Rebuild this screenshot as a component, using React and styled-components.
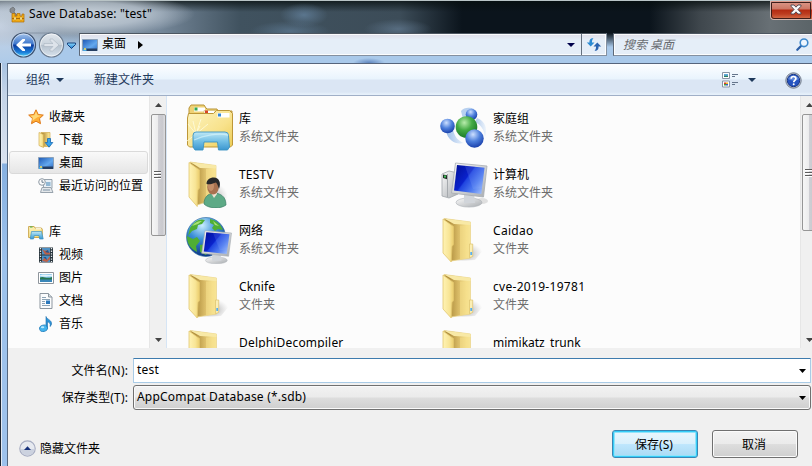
import React from 'react';
import styled, { createGlobalStyle } from 'styled-components';

const Global = createGlobalStyle`
  * { box-sizing: border-box; }
  body {
    margin: 0;
    overflow: hidden;
    background: #f0f0f0;
    font-family: "Noto Sans", "Noto Sans CJK SC", sans-serif;
    font-size: 12px;
    color: #000;
  }
  svg { display: block; flex: none; }
`;

/* ---------- window frame ---------- */

const Window = styled.div`
  width: 812px;
  height: 466px;
  overflow: hidden;
  display: flex;
  flex-direction: column;
  border-top: 1px solid #b9c4c6;
  background:
    radial-gradient(ellipse 110px 22px at 85px 13px, rgba(205, 213, 221, 0.9) 0%, rgba(188, 199, 210, 0.8) 55%, rgba(150, 165, 180, 0) 100%),
    radial-gradient(ellipse 60px 46px at 0px 24px, rgba(200, 212, 228, 0.95), rgba(190, 205, 222, 0) 100%),
    radial-gradient(ellipse 24px 12px at 304px 14px, rgba(100, 130, 158, 0.75), transparent),
    radial-gradient(ellipse 40px 10px at 290px 30px, rgba(100, 130, 158, 0.6), transparent),
    radial-gradient(ellipse 34px 10px at 398px 28px, rgba(105, 130, 155, 0.6), transparent),
    radial-gradient(ellipse 16px 5px at 369px 62px, rgba(70, 110, 175, 0.75), transparent),
    linear-gradient(180deg, rgba(6, 14, 14, 0.75) 0, rgba(6, 14, 14, 0) 11px, rgba(0, 0, 0, 0) 32px, #a9c9ea 46px, #a9c9ea 64px),
    linear-gradient(90deg, #9caaba 0, #758799 160px, #40525f 240px, #3c4c58 400px, #0b141c 462px, #0b141c 650px, #3f474d 700px, #687075 770px, #5b6468 812px);
`;

const TitleBar = styled.header`
  height: 32px;
  display: flex;
  flex: none;
  align-items: flex-start;
  justify-content: space-between;
`;

const Title = styled.div`
  display: flex;
  align-items: flex-start;
  gap: 4px;
  padding: 4px 0 0 9px;
  h1 {
    margin: 0;
    font-size: 12px;
    font-weight: 400;
    line-height: 18px;
    white-space: nowrap;
    letter-spacing: 0.14px;
  }
`;

const CloseButton = styled.button`
  width: 42px;
  height: 19px;
  padding: 0 0 2px 8px;
  border: 1px solid #d3b5ae;
  border-width: 0 0 1px 1px;
  border-radius: 0 0 0 4px;
  outline: 1px solid #3d1d1a;
  outline-offset: -2px;
  background: linear-gradient(#dd9c8d 0, #cd7765 8px, #b32a12 9px, #bd3c20 13px, #d7714c 18px);
  display: flex;
  align-items: center;
  justify-content: center;
`;

const NavBar = styled.nav`
  height: 24px;
  flex: none;
  display: flex;
  align-items: flex-start;
  padding-left: 10px;
`;

const NavButtons = styled.div`
  width: 69px;
  height: 26px;
  margin-top: -1px;
`;

const Field = styled.div`
  height: 23px;
  width: ${(p) => p.$width}px;
  margin-right: ${(p) => p.$gap || 0}px;
  display: flex;
  flex: none;
  align-items: center;
  border: 1px solid #8490a0;
  border-top-color: #4d5661;
  border-left-color: #5d6877;
  box-shadow: inset 0 0 0 1px rgba(255, 255, 255, 0.85);
  background: linear-gradient(#dfdee8, #e5eef8 6px, #e5eef8);
`;

const Crumb = styled.div`
  display: flex;
  align-items: center;
  gap: 4px;
  padding-left: 2px;
  flex: 1;
  line-height: 18px;
  span { margin-right: 8px; padding-bottom: 1px; }
`;

const Refresh = styled.div`
  width: 25px;
  height: 21px;
  border-left: 1px solid #64707e;
  display: flex;
  align-items: center;
  justify-content: center;
`;

const DropSlot = styled.div`
  width: 20px;
  display: flex;
  justify-content: center;
`;

const SearchHint = styled.span`
  flex: 1;
  padding-left: 9px;
  color: #6a6d72;
  font-style: italic;
  line-height: 18px;
`;

const Frame = styled.div`
  flex: 1;
  min-height: 0;
  margin-top: 6px;
  display: flex;
`;

const LeftEdge = styled.div`
  width: 8px;
  flex: none;
  border-left: 1px solid #1c2532;
  border-right: 1px solid #54677f;
  background: linear-gradient(90deg, #e2eaf4 0, #e2eaf4 1px, transparent 1px),
    linear-gradient(#a7c3e2 0, #c3d3e7 30px, #d9e2ef 100px, #86b0e0 101px, #9dc2ec 200px, #9dc2ec);
`;

const Body = styled.div`
  flex: 1;
  min-width: 0;
  display: flex;
  flex-direction: column;
  border-top: 1px solid #56657c;
`;

/* ---------- toolbar ---------- */

const Toolbar = styled.div`
  height: 32px;
  flex: none;
  display: flex;
  align-items: center;
  padding: 1px 0 0 18px;
  color: #1e395b;
  line-height: 18px;
  border-bottom: 1px solid #a0afc7;
  background: linear-gradient(#fdfeff 0, #e9f4fd 15px, #dbe6f4 16px, #dbe6f4 28px, #e6f0fa 30px);
`;

const ToolItem = styled.div`
  display: flex;
  align-items: center;
  gap: ${(p) => p.$gap || 5}px;
  margin-right: ${(p) => p.$after || 0}px;
`;

const Spacer = styled.div`
  flex: 1;
`;

/* ---------- panes ---------- */

const Panes = styled.div`
  height: 252px;
  flex: none;
  display: flex;
  overflow: hidden;
  background: #fcfcfc;
`;

const Sidebar = styled.aside`
  width: 141px;
  flex: none;
  padding-top: 9px;
`;

const TreeRow = styled.div`
  height: 23px;
  margin: 0 1px;
  margin-bottom: ${(p) => (p.$last ? 23 : 0)}px;
  padding-left: ${(p) => (p.$child ? 28 : 18)}px;
  display: flex;
  align-items: center;
  gap: 5px;
  white-space: nowrap;
  line-height: 18px;
  border: 1px solid ${(p) => (p.$selected ? '#dadada' : 'transparent')};
  border-radius: 3px;
  background: ${(p) => (p.$selected ? 'linear-gradient(#f9f9f9, #e6e6e6)' : 'none')};
`;

const Track = styled.div`
  width: 17px;
  flex: none;
  display: flex;
  flex-direction: column;
  align-items: center;
  background: #f0f0f0;
  border-left: 1px solid #e6e6e6;
`;

const Arrow = styled.div`
  height: 17px;
  width: 15px;
  display: flex;
  align-items: center;
  justify-content: center;
`;

const Thumb = styled.div`
  width: 15px;
  height: ${(p) => p.$height}px;
  margin-top: 1px;
  margin-bottom: auto;
  border: 1px solid #969696;
  border-radius: 2px;
  background: linear-gradient(90deg, #f6f6f6, #ececed 45%, #cfcfd4 50%, #c9c9ce 80%, #dedee0);
  display: flex;
  align-items: center;
  justify-content: center;
`;

const FileList = styled.main`
  flex: 1;
  min-width: 0;
  border-left: 1px solid #d6e5f5;
  padding: 4px 0 0 16px;
  display: grid;
  grid-template-columns: 254px 254px;
  grid-auto-rows: 56px;
  align-content: start;
`;

const FileItem = styled.div`
  display: flex;
  align-items: center;
  gap: 4px;
`;

const FileText = styled.div`
  line-height: 18px;
  white-space: nowrap;
  small {
    display: block;
    font-size: 12px;
    color: #6d6d6d;
  }
`;

const FileName = styled.div`
  letter-spacing: ${(p) => p.$spacing || 0}px;
`;

const ClippedTrack = styled.div`
  width: 12px;
  overflow: hidden;
  display: flex;
  flex: none;
`;

/* ---------- footer ---------- */

const Footer = styled.footer`
  flex: 1;
  background: #f0f0f0;
  padding-top: 10px;
`;

const FormRow = styled.div`
  display: flex;
  align-items: flex-start;
  gap: 5px;
  height: 27px;
  label {
    width: 120px;
    text-align: right;
    line-height: 25px;
    letter-spacing: 0.15px;
  }
`;

const Combo = styled.div`
  width: 678px;
  height: 25px;
  padding: 0 4px 0 3px;
  display: flex;
  align-items: center;
  justify-content: space-between;
  line-height: 18px;
  letter-spacing: 0.2px;
  span { padding-bottom: 1px; }
  border: 1px solid ${(p) => (p.$input ? '#a9cbe6' : '#707070')};
  border-top-color: ${(p) => (p.$input ? '#3d7bad' : '#707070')};
  border-radius: ${(p) => (p.$input ? 1 : 3)}px;
  box-shadow: ${(p) => (p.$input ? 'none' : 'inset 0 0 0 1px #fafafa')};
  background: ${(p) =>
    p.$input ? '#fff' : 'linear-gradient(#f2f2f2, #ebebeb 48%, #dddddd 52%, #cfcfcf)'};
`;

const Actions = styled.div`
  display: flex;
  align-items: center;
  height: 28px;
  margin-top: 18px;
  padding-right: 14px;
  gap: 14px;
`;

const HideFolders = styled.div`
  display: flex;
  align-items: center;
  gap: 4px;
  padding: 8px 0 0 11px;
  line-height: 18px;
  flex: 1;
  span { padding-top: 1px; }
`;

const PushButton = styled.button`
  width: 86px;
  height: 28px;
  padding: 0 2px 1px 0;
  font: inherit;
  color: #000;
  border: 1px solid ${(p) => (p.$primary ? '#3a86b4' : '#707070')};
  border-radius: 3px;
  box-shadow: ${(p) =>
    p.$primary ? 'inset 0 0 0 1px #35cdf8, inset 0 0 0 2px #93e3fa' : 'inset 0 0 0 1px #fbfbfb'};
  background: ${(p) =>
    p.$primary
      ? 'linear-gradient(#eaf6fd, #d9f0fc 48%, #bee6fd 52%, #a9daf3)'
      : 'linear-gradient(#f2f2f2, #ebebeb 48%, #dddddd 52%, #cfcfcf)'};
`;

/* ---------- glyphs ---------- */

const Down = ({ color = '#000', w = 7 }) => (
  <svg width={w} height="4" viewBox="0 0 8 4" preserveAspectRatio="none">
    <path d="M0 0h8L4 4z" fill={color} />
  </svg>
);
const Up = () => (
  <svg width="7" height="4" viewBox="0 0 7 4"><path d="M0 4h7L3.5 0z" fill="#444" /></svg>
);
const Grip = () => (
  <svg width="8" height="8" viewBox="0 0 8 8">
    <path d="M0 .5h7M0 3.5h7M0 6.5h7" stroke="#5c5c5c" />
    <path d="M0 1.5h7M0 4.5h7M0 7.5h7" stroke="#fff" />
  </svg>
);

const Defs = () => (
  <svg width="0" height="0">
    <defs>
      <linearGradient id="flap" x1="0" x2="1"><stop offset="0" stopColor="#fff3b4" /><stop offset=".6" stopColor="#f8e596" /><stop offset="1" stopColor="#ebcd6c" /></linearGradient>
      <linearGradient id="inner" x1="0" x2="1"><stop offset=".2" stopColor="#b08f3e" /><stop offset=".55" stopColor="#d9bb66" /><stop offset=".85" stopColor="#f5df8c" /><stop offset="1" stopColor="#f9e89f" /></linearGradient>
      <linearGradient id="front" x1="0" x2="1" y2="1"><stop offset="0" stopColor="#fdf4c0" /><stop offset=".6" stopColor="#f8e28c" /><stop offset="1" stopColor="#eccc55" /></linearGradient>
      <linearGradient id="stand" x2="0" y2="1"><stop offset="0" stopColor="#c0e8f5" /><stop offset=".5" stopColor="#73c0e6" /><stop offset="1" stopColor="#3b96d0" /></linearGradient>
      <linearGradient id="screen" x1="0" x2="1" y1=".2" y2=".9"><stop offset="0" stopColor="#0212a0" /><stop offset=".38" stopColor="#0a22cc" /><stop offset=".42" stopColor="#1f45e0" /><stop offset=".7" stopColor="#4f7cf0" /><stop offset="1" stopColor="#a4c2fb" /></linearGradient>
      <linearGradient id="screen2" x1="0" x2="1" y2="1"><stop offset="0" stopColor="#1b56b3" /><stop offset=".6" stopColor="#63a8ee" /><stop offset="1" stopColor="#2f6cc4" /></linearGradient>
      <linearGradient id="silver" x1="0" x2="1" y2="1"><stop offset="0" stopColor="#fafafa" /><stop offset="1" stopColor="#a9adb1" /></linearGradient>
      <radialGradient id="green" cx=".4" cy=".3" r=".7"><stop offset="0" stopColor="#b7ecab" /><stop offset=".5" stopColor="#44ab45" /><stop offset="1" stopColor="#1a7a28" /></radialGradient>
      <radialGradient id="blueBall" cx=".42" cy=".28" r=".75"><stop offset="0" stopColor="#cde0ff" /><stop offset=".5" stopColor="#4e80dc" /><stop offset="1" stopColor="#163ca8" /></radialGradient>
      <radialGradient id="ocean" cx=".4" cy=".2" r=".8"><stop offset="0" stopColor="#c9eeff" /><stop offset=".45" stopColor="#3b8fd8" /><stop offset="1" stopColor="#0c3585" /></radialGradient>
      <linearGradient id="nav" x2="0" y2="1"><stop offset="0" stopColor="#a8c6ec" /><stop offset=".46" stopColor="#3a74cb" /><stop offset=".5" stopColor="#0b3a9e" /><stop offset=".8" stopColor="#1a7cd8" /><stop offset="1" stopColor="#53dcfb" /></linearGradient>
      <linearGradient id="navOff" x2="0" y2="1"><stop offset="0" stopColor="#e2e7ed" /><stop offset=".48" stopColor="#c9d3dc" /><stop offset=".52" stopColor="#b5c1cd" /><stop offset="1" stopColor="#d9e4ee" /></linearGradient>
      <radialGradient id="shade" cx=".35" cy=".6" r=".6"><stop offset="0" stopColor="#666" stopOpacity=".55" /><stop offset="1" stopColor="#999" stopOpacity="0" /></radialGradient>
      <linearGradient id="gem" x2="0" y2="1"><stop offset="0" stopColor="#8fdcff" /><stop offset="1" stopColor="#1a78cf" /></linearGradient>
      <linearGradient id="swirl" x1="0" x2="1"><stop offset="0" stopColor="#7ba7e2" /><stop offset="1" stopColor="#e6f0fb" /></linearGradient>
    </defs>
  </svg>
);

const AppIcon = () => (
  <svg width="16" height="20" viewBox="0 0 16 20">
    <path d="M1 4l3-2 2 2-1 3 5 5-2 2-5-6-2-1z" fill="#888c90" stroke="#5f6468" strokeWidth=".6" />
    <path d="M3 11V8.500h3V11h2V8.500h3V11h2V9h2v8H3z" fill="#f2ad18" stroke="#b06f08" strokeWidth=".7" />
    <path d="M3 13.500h12" stroke="#a86a0a" />
    <path d="M5 12h2v3H5zM11 12h2v3h-2z" fill="#fff0a0" stroke="#b06f08" strokeWidth=".4" />
  </svg>
);

const NavArt = () => (
  <svg width="69" height="27" viewBox="0 0 69 27">
    <path d="M13 1h28c3 0 4 2 6 5" fill="none" stroke="#7c8a9b" strokeOpacity=".7" />
    <circle cx="13.500" cy="13" r="12" fill="url(#nav)" stroke="#41536e" strokeWidth="1.200" />
    <circle cx="13.500" cy="13" r="11" fill="none" stroke="#e0ebf8" strokeOpacity=".75" />
    <path d="M6 13l6.500-6h2.500v1.600L12 11.500h9v3h-9l3 3V19h-2.500z" fill="#fff" />
    <circle cx="41.500" cy="13" r="12" fill="url(#navOff)" stroke="#6b7b8e" strokeWidth="1.200" />
    <circle cx="41.500" cy="13" r="11" fill="none" stroke="#fff" strokeOpacity=".6" />
    <path d="M49 13l-6.500-6H40v1.600l3 2.900h-9v3h9l-3 3V19h2.500z" fill="#dde3ea" stroke="#a1acb9" strokeWidth=".5" />
    <path d="M57.500 11h8v1.500l-4 4-4-4z" fill="url(#gem)" stroke="#15407c" />
  </svg>
);

const CloseGlyph = () => (
  <svg width="12" height="11" viewBox="0 0 12 11">
    <path d="M1 1h3l2 2.200L8 1h3v1.200L7.900 5.500 11 8.800V10H8L6 7.800 4 10H1V8.800l3.100-3.300L1 2.200z" fill="#fafafa" stroke="#47424d" strokeWidth=".9" />
  </svg>
);

const DesktopIcon = () => (
  <svg width="16" height="16" viewBox="0 0 16 16">
    <path d="M.5 2.500h15v11H.5z" fill="url(#screen2)" stroke="#8ba0b8" />
    <path d="M1 11.500h14V14H1z" fill="#263f62" />
    <path d="M1 11.500h3.500V14H1z" fill="#47a6df" />
    <circle cx="3" cy="12" r="1" fill="#ffe05a" />
  </svg>
);

const RefreshIcon = () => (
  <svg width="16" height="15" viewBox="0 0 16 15">
    <path d="M7.500 1.200C4.200 1 3.300 3 3.500 5.500H.8L4.700 9.500l3.800-4H6C5.800 3.500 6.500 2.200 7.500 1.200z" fill="#2b8bd3" />
    <path d="M8.500 13.800c3.300.2 4.200-1.800 4-4.300h2.700L11.300 5.500l-3.800 4H10c.2 2-.5 3.300-1.500 4.300z" fill="#2a63b0" />
  </svg>
);

const SearchIcon = () => (
  <svg width="13" height="13" viewBox="0 0 13 13">
    <path d="M1.300 11.800L5 8" stroke="#2c5fa8" strokeWidth="2.200" strokeLinecap="round" />
    <circle cx="8" cy="4.800" r="3.800" fill="#eef6ff" stroke="#3f89cc" strokeWidth="1.600" />
  </svg>
);

const ViewIcon = () => (
  <svg width="16" height="16" viewBox="0 0 16 16">
    <path d="M.5.500h7v6h-7zM.5 9h7v6h-7z" fill="#fff" stroke="#8995a5" />
    <path d="M2 2h4v3H2z" fill="#5fa9d8" /><path d="M2 3.800h4V5H2z" fill="#2f8060" />
    <path d="M2 10.500h2V12H2z" fill="#d63a2e" /><path d="M4 10.500h2V12H4z" fill="#f3b61c" />
    <path d="M2 12h2v1.500H2z" fill="#3fa03f" /><path d="M4 12h2v1.500H4z" fill="#3158c8" />
    <path d="M10 2.500h6M10 4.500h3M10 10.500h6M10 12.500h3" stroke="#65758b" />
  </svg>
);

const HelpIcon = () => (
  <svg width="17" height="17" viewBox="0 0 17 17">
    <circle cx="8.500" cy="8.500" r="7.700" fill="#c9cfd9" stroke="#6e7889" strokeWidth="1" />
    <circle cx="8.500" cy="8.500" r="6.200" fill="#2553c0" stroke="#1a3784" />
    <path d="M3 7a6 6 0 0 1 11 0c-3 2-7 2-11 0z" fill="#7ea4ea" opacity=".6" />
    <path d="M6.200 6.800c0-3 4.700-3 4.700-.2 0 1.700-2.200 1.700-2.200 3.600" fill="none" stroke="#fff" strokeWidth="1.700" />
    <circle cx="8.700" cy="12.200" r="1" fill="#fff" />
  </svg>
);

const small = { width: 16, height: 16, viewBox: '0 0 16 16' };

const StarIcon = () => (
  <svg {...small}>
    <path d="M8 .8l2.200 4.700 5.100.6-3.800 3.500 1 5.100L8 12.200l-4.500 2.500 1-5.100L.7 6.100l5.100-.6z" fill="#ffae35" stroke="#df7a1b" strokeLinejoin="round" />
    <path d="M8 2.500l1.600 3.800 4 .5-4.200 1.400L4 12l1-3.300-2.800-2 4.200-.4z" fill="#ffd877" />
  </svg>
);
const DownloadIcon = () => (
  <svg {...small}>
    <path d="M3 .5h9v14H3z" fill="url(#inner)" stroke="#d2ae52" strokeWidth=".7" />
    <path d="M1 .5l4.500 2v13L1 13.500z" fill="url(#flap)" stroke="#d2ae52" strokeWidth=".7" />
    <path d="M9.500 6.500h3v4h2.300L11 15.200l-3.800-4.700h2.300z" fill="#36a3ec" stroke="#1768b2" strokeWidth=".8" />
  </svg>
);
const RecentIcon = () => (
  <svg {...small}>
    <path d="M5.500 1.500h8.500v9H5.500z" fill="#e8eff5" stroke="#98a3ad" />
    <path d="M8 4h4.500v4H8z" fill="#93b8d3" /><path d="M4 9.500h9l2 5H2.500z" fill="#e3e7ea" stroke="#98a3ad" />
    <path d="M5 12h7" stroke="#7e93a5" />
    <circle cx="4" cy="4" r="3.300" fill="#fbfbfb" stroke="#8e9aa4" /><path d="M4 2v2.300h1.800" fill="none" stroke="#4d6376" strokeWidth=".8" />
  </svg>
);
const LibSmall = () => (
  <svg {...small}>
    <path d="M.6 2.500h5.500l1 1.500h6.300l.9 1.300v8.200H.6z" fill="url(#front)" stroke="#c7a243" strokeWidth=".9" />
    <path d="M2 3h2.500" stroke="#3fad4d" /><path d="M8 4.800h5" stroke="#fff" />
    <path d="M3.500 7.500h10l1.700 7.500h-3.500l-.7-3.500H6.300L5.500 15H2.200z" fill="url(#stand)" stroke="#3a92c4" strokeWidth=".7" />
  </svg>
);
const VideoIcon = () => (
  <svg {...small}>
    <path d="M1 .5h14v15H1z" fill="#28343c" /><path d="M4 1h8v6.500H4zM4 8.500h8v6.500H4z" fill="#4d91c5" />
    <path d="M4 2l3 2 2-1 3 3v1.500H7zM4 14l3-4 2 3 3-4v3l-3 3z" fill="#bf6046" /><path d="M7 5l3-2 1 3zM5 10h3l1 3z" fill="#23568f" />
    <path d="M2.500 1v14M13.500 1v14" stroke="#e5e9ec" strokeWidth="1.300" strokeDasharray="1.300 1.300" />
  </svg>
);
const PictureIcon = () => (
  <svg {...small}>
    <path d="M.5 2.500h15v11H.5z" fill="#fff" stroke="#8e959c" /><path d="M2 4h12v8H2z" fill="#82c3ec" />
    <path d="M2 7.500c4-2 6 2 12-.5V10H2z" fill="#277751" /><path d="M2 9.500h12V12H2z" fill="#3a86b8" /><path d="M2 5.500c3-2 6 0 12-1v2c-5 0-7 .6-12-.2z" fill="#e2f4fb" />
  </svg>
);
const DocIcon = () => (
  <svg {...small}>
    <path d="M2 .5h8.500l3.500 3.500v11.500H2z" fill="#fbfcfd" stroke="#8d969f" /><path d="M10.500.500V4H14" fill="#d6dde3" stroke="#8d969f" />
    <path d="M4 4.500h4M4 6.500h8M4 8.500h3M4 10.500h3M4 12.500h8" stroke="#8098ad" strokeWidth=".9" /><path d="M8 7.500h4v3.500H8z" fill="#2b78bc" />
  </svg>
);
const MusicIcon = () => (
  <svg {...small}>
    <path d="M8 .5c1 3 6 3.500 5.500 7.500-.1 1.300-.8 2-1.500 2.500.9-2.800-.5-4-2.500-4.700v6.700h-1.500z" fill="#2c94d8" stroke="#1669aa" strokeWidth=".6" />
    <ellipse cx="5.500" cy="12.300" rx="4" ry="3.200" fill="#43b3ec" stroke="#1c78b8" strokeWidth=".7" transform="rotate(-15 5.500 12.300)" />
    <ellipse cx="4.600" cy="11.300" rx="1.700" ry="1" fill="#baeaff" />
  </svg>
);

const big = { width: 52, height: 48, viewBox: '0 0 52 48' };

const FolderShape = () => (
  <>
    <path d="M20 45l18-1 9-11c1-4-6-4-13-6z" fill="url(#shade)" />
    <path d="M7 2.500l26.500 3.500v36L14 45z" fill="url(#inner)" stroke="#e8d185" strokeWidth=".7" />
    <path d="M7 2.500l26.500 3.500v3L17 8z" fill="#f8e9a6" />
    <path d="M23 9.500L33 9v33l-10 1.500z" fill="#f6e08c" opacity=".55" />
    <path d="M32.500 28h3.200v12.500l-3.200 1.200z" fill="#fbeeb4" stroke="#dcc26a" strokeWidth=".7" /><path d="M33.300 36h1.800v3h-1.800z" fill="#55aef0" />
    <path d="M6 3l10.500 7.500v18l-1.500 2-.8 15.500L6 37z" fill="url(#flap)" stroke="#e2c76e" strokeWidth=".8" />
  </>
);
const FolderIcon = () => <svg {...big}><FolderShape /></svg>;

const UserFolder = () => (
  <svg {...big}>
    <path d="M22 46l22-2 2-13-11-8z" fill="url(#shade)" />
    <path d="M7 2l26 3.500V39L14 45z" fill="url(#inner)" stroke="#e8d185" strokeWidth=".7" />
    <path d="M7 2l26 3.500v3L17 8z" fill="#f8e9a6" />
    <path d="M23 9L33 8.500V40l-10 2z" fill="#f8e18c" opacity=".6" />
    <path d="M6 2.500l10.500 7.500v18l-1.500 2-.8 16.500L6 37z" fill="url(#flap)" stroke="#e2c76e" strokeWidth=".8" />
    <path d="M21 44c0-7 4-10 9-11 7 0 13 3 13 12-5 4-17 4-22-1z" fill="#5daa86" stroke="#397e64" strokeWidth=".7" />
    <path d="M28 33l3 5 3-4-1-4h-4z" fill="#efe3d3" /><ellipse cx="30" cy="27" rx="5.800" ry="7.500" fill="#a8714f" />
    <ellipse cx="28" cy="26" rx="3" ry="5" fill="#d19c75" opacity=".7" />
    <path d="M23.500 24c0-4 3-6.500 7.500-6.500 5 .3 7.500 5 5 11.500-1-3-1.500-5-3-6.500-3 1-7 2.500-9.500 1.500z" fill="#29292a" />
  </svg>
);

const LibraryIcon = () => (
  <svg {...big}>
    <path d="M6 8V4l2-3h13l2 3 1 1h10l1 2h14v33H6z" fill="#efd275" stroke="#b99436" />
    <path d="M11 3.500h11v4H11z" fill="#fff" /><path d="M11.500 3.500h3v3h-3z" fill="#33a852" />
    <path d="M21 6.500h11v4H21z" fill="#fff" stroke="#ceb66b" strokeWidth=".6" /><path d="M22 6.500h3v3h-3z" fill="#d84427" />
    <path d="M4.500 14l1-4.500h25l3-3h13l3 3v31.500l-2 2h-41l-2-2z" fill="url(#front)" stroke="#bd9738" />
    <path d="M34.500 9h12v4.500h-12z" fill="#fff" /><path d="M35 9.500h3v3h-3z" fill="#3488d8" />
    <path d="M13 30L18 15M13 30l12-10M13 30L5 20M13 30l-3-13M13 30l-9 7M13 30l4-8" stroke="#fffde0" opacity=".8" />
    <path d="M13 28h29q3.500 0 3.500 3.500L46.500 43l-2 3h-9l-1-8H21l-1 8h-8l-2-3V31.500Q10 28 13 28z" fill="url(#stand)" stroke="#3b93c3" strokeWidth=".9" />
    <path d="M11 36c10-5 24-7 34-5" fill="none" stroke="#d6f5fc" strokeWidth="1.300" opacity=".65" />
  </svg>
);

const Monitor = () => (
  <>
    <ellipse cx="32" cy="42.500" rx="13" ry="4.600" fill="url(#silver)" stroke="#adb2b7" strokeWidth=".6" />
    <path d="M27 33h10l1 10H27z" fill="#d1d5da" />
    <path d="M18.500 3L50 6 46.500 37 14.500 33z" fill="url(#silver)" stroke="#a7acb3" strokeWidth=".8" />
    <path d="M20 5l27.500 2.700L44.300 34 17 30.500z" fill="url(#screen)" />
    <path d="M28 6l19.500 2-2.700 20L36 29z" fill="#a9c5ff" opacity=".15" />
  </>
);

const ComputerIcon = () => (
  <svg {...big}>
    <ellipse cx="45" cy="41" rx="6" ry="3" fill="#aaa" opacity=".35" />
    <path d="M5 14l7-3 9 2v21l-9 4-7-2z" fill="url(#silver)" stroke="#a1a6ab" strokeWidth=".8" />
    <path d="M10.500 14v23" stroke="#a6aaae" /><path d="M6 14.500l4 .7v4L6 18z" fill="#222d26" /><path d="M7 15.500h2v2H7z" fill="#40c55c" />
    <Monitor />
  </svg>
);

const NetworkIcon = () => (
  <svg {...big}>
    <circle cx="23" cy="21" r="19.500" fill="url(#ocean)" stroke="#246298" strokeWidth=".6" />
    <path d="M7 12c4-7 10-10 15-8l-3 4-4 1-1 4-5 2-4 5zM27 3c8 2 11 6 13 11l-5-1-3 2-3-3 2-3-4-2zM4 20l6 3 4-2 3 4-4 5 1 6C7 32 4 28 4 20zM17 29l6-1 4 5-4 6-6-3z" fill="#4fae35" />
    <path d="M9 10c3-4 7-5 10-5l-4 3zM30 5l6 5-4-1z" fill="#c0ed86" opacity=".8" />
    <g transform="translate(6.500 12.500) scale(.84 .75)"><Monitor /></g>
  </svg>
);

const HomegroupIcon = () => (
  <svg {...big}>
    <path d="M9 27c2 10 10 14 18 12-6-2-9-6-11-13z" fill="url(#swirl)" opacity=".75" />
    <path d="M40 14c8 3 11 10 8 19-1-8-4-12-10-15z" fill="url(#swirl)" opacity=".6" />
    <path d="M24 7c3-4 9-4 13-2l-4 4-7 6z" fill="#a6c5ec" opacity=".8" />
    <circle cx="34.500" cy="10.500" r="5.800" fill="url(#blueBall)" />
    <circle cx="10.500" cy="22" r="7.300" fill="url(#blueBall)" />
    <circle cx="29.500" cy="23" r="10.800" fill="url(#green)" />
    <circle cx="37.500" cy="34.500" r="9.200" fill="url(#blueBall)" />
  </svg>
);

const HideIcon = () => (
  <svg width="17" height="17" viewBox="0 0 17 17">
    <circle cx="8.500" cy="8.500" r="7.700" fill="#e7eaf0" stroke="#a7adc2" strokeWidth="1.200" />
    <path d="M1.500 9h14a7 6.500 0 0 1-14 0z" fill="#ccd2df" />
    <path d="M5 10h7L8.500 6.300z" fill="#16317b" />
  </svg>
);

/* ---------- data ---------- */

const tree = [
  { name: '收藏夹', Icon: StarIcon },
  { name: '下载', Icon: DownloadIcon, child: true },
  { name: '桌面', Icon: DesktopIcon, child: true, selected: true },
  { name: '最近访问的位置', Icon: RecentIcon, child: true, last: true },
  { name: '库', Icon: LibSmall },
  { name: '视频', Icon: VideoIcon, child: true },
  { name: '图片', Icon: PictureIcon, child: true },
  { name: '文档', Icon: DocIcon, child: true },
  { name: '音乐', Icon: MusicIcon, child: true },
];

const SYSTEM = '系统文件夹';
const FOLDER = '文件夹';
const files = [
  { name: '库', kind: SYSTEM, Icon: LibraryIcon },
  { name: '家庭组', kind: SYSTEM, Icon: HomegroupIcon },
  { name: 'TESTV', kind: SYSTEM, Icon: UserFolder, spacing: 0.2 },
  { name: '计算机', kind: SYSTEM, Icon: ComputerIcon },
  { name: '网络', kind: SYSTEM, Icon: NetworkIcon },
  { name: 'Caidao', kind: FOLDER, Icon: FolderIcon, spacing: 0.3 },
  { name: 'Cknife', kind: FOLDER, Icon: FolderIcon, spacing: 0.1 },
  { name: 'cve-2019-19781', kind: FOLDER, Icon: FolderIcon, spacing: 0.3 },
  { name: 'DelphiDecompiler', kind: FOLDER, Icon: FolderIcon, spacing: 0.18 },
  { name: 'mimikatz_trunk', kind: FOLDER, Icon: FolderIcon, spacing: 0 },
];

const Scrollbar = ({ thumb }) => (
  <Track>
    <Arrow><Up /></Arrow>
    <Thumb $height={thumb}><Grip /></Thumb>
    <Arrow><Down color="#444" /></Arrow>
  </Track>
);

export default function App() {
  return (
    <Window>
      <Global />
      <TitleBar>
        <Title>
          <AppIcon />
          <h1>Save Database: "test"</h1>
        </Title>
        <CloseButton aria-label="Close"><CloseGlyph /></CloseButton>
      </TitleBar>
      <NavBar>
        <NavButtons><NavArt /></NavButtons>
        <Field $width={528} $gap={6}>
          <Crumb>
            <DesktopIcon />
            <span>桌面</span>
            <svg width="5" height="8" viewBox="0 0 5 8"><path d="M0 0v8l5-4z" /></svg>
          </Crumb>
          <DropSlot><Down w={8} color="#00004a" /></DropSlot>
          <Refresh><RefreshIcon /></Refresh>
        </Field>
        <Field $width={210}>
          <SearchHint>搜索 桌面</SearchHint>
          <ToolItem $after={13}><SearchIcon /></ToolItem>
        </Field>
      </NavBar>
      <Frame>
        <LeftEdge />
        <Body>
          <Toolbar>
            <ToolItem $gap={6} $after={30}>组织<Down color="#1e395b" w={8} /></ToolItem>
            <ToolItem>新建文件夹</ToolItem>
            <Spacer />
            <ToolItem $gap={10} $after={29}><ViewIcon /><Down color="#1e395b" w={8} /></ToolItem>
            <ToolItem $after={10}><HelpIcon /></ToolItem>
          </Toolbar>
          <Panes>
            <Sidebar>
              {tree.map(({ name, Icon, child, selected, last }) => (
                <TreeRow key={name} $child={child} $selected={selected} $last={last}>
                  <Icon />
                  <span>{name}</span>
                </TreeRow>
              ))}
            </Sidebar>
            <Scrollbar thumb={122} />
            <FileList>
              {files.map(({ name, kind, Icon, spacing }) => (
                <FileItem key={name}>
                  <Icon />
                  <FileText>
                    <FileName $spacing={spacing}>{name}</FileName>
                    <small>{kind}</small>
                  </FileText>
                </FileItem>
              ))}
            </FileList>
            <ClippedTrack><Scrollbar thumb={117} /></ClippedTrack>
          </Panes>
          <Footer>
            <FormRow>
              <label>文件名(N):</label>
              <Combo $input><span>test</span><Down /></Combo>
            </FormRow>
            <FormRow>
              <label>保存类型(T):</label>
              <Combo><span>AppCompat Database (*.sdb)</span><Down /></Combo>
            </FormRow>
            <Actions>
              <HideFolders><HideIcon /><span>隐藏文件夹</span></HideFolders>
              <PushButton $primary>保存(S)</PushButton>
              <PushButton>取消</PushButton>
            </Actions>
          </Footer>
        </Body>
      </Frame>
      <Defs />
    </Window>
  );
}
